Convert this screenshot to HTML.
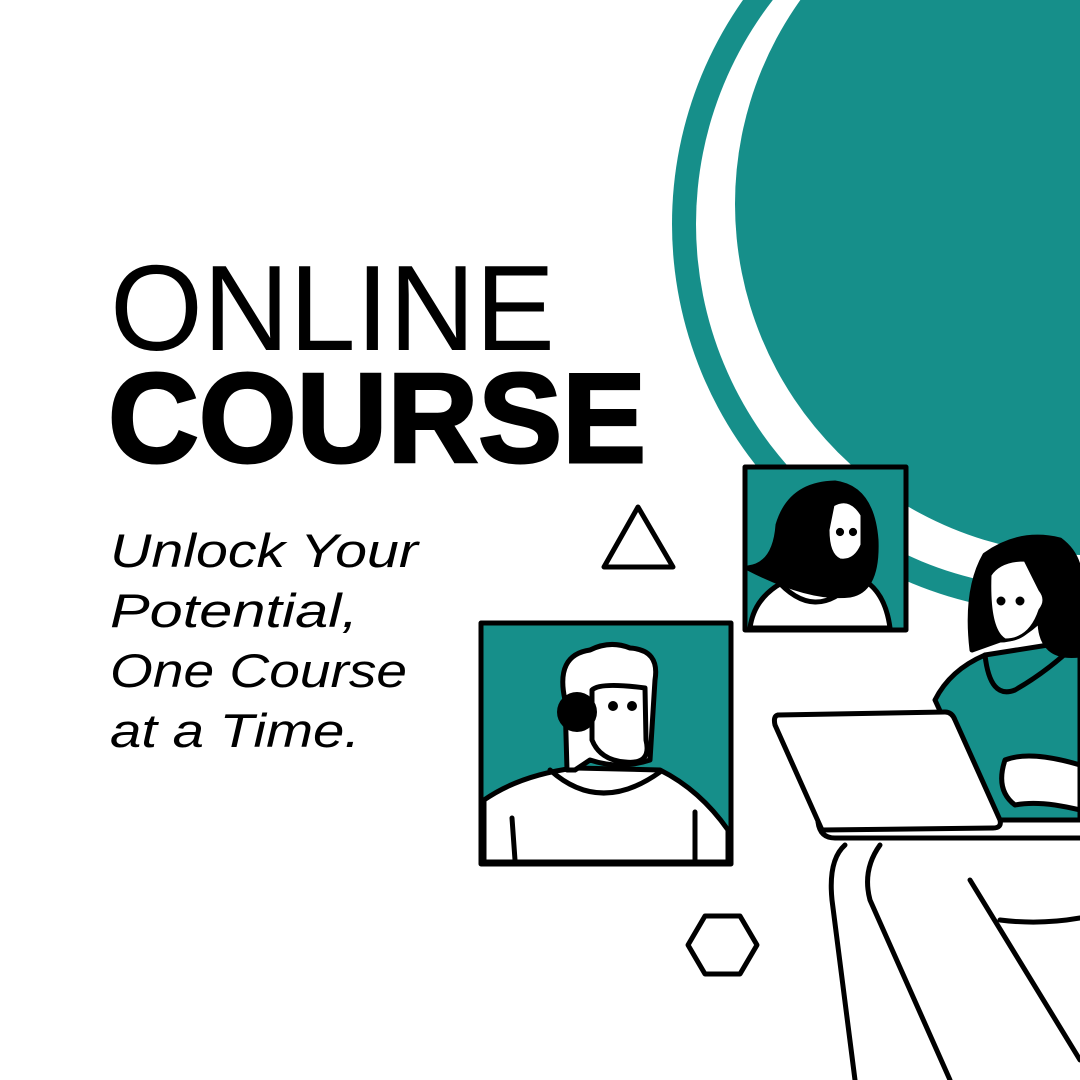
<!DOCTYPE html>
<html><head><meta charset="utf-8"><style>
html,body{margin:0;padding:0;background:#fff}
svg{display:block}
</style></head><body>
<svg width="1080" height="1080" viewBox="0 0 1080 1080" xmlns="http://www.w3.org/2000/svg">
<rect width="1080" height="1080" fill="#fff"/>
<circle cx="1061" cy="224" r="389" fill="#168f8a"/>
<circle cx="1061" cy="224" r="365" fill="#fff"/>
<circle cx="1086" cy="204" r="351" fill="#168f8a"/>

<g font-family="'Liberation Sans',sans-serif" fill="#000">
<text x="110" y="350" font-size="122" textLength="445" lengthAdjust="spacingAndGlyphs" font-weight="300" stroke="#fff" stroke-width="2.5" paint-order="stroke">ONLINE</text>
<text x="108" y="462" font-size="127" font-weight="bold" textLength="538" lengthAdjust="spacingAndGlyphs" stroke="#000" stroke-width="3">COURSE</text>
<g font-style="italic" font-size="47">
<text x="110" y="567" textLength="308" lengthAdjust="spacingAndGlyphs">Unlock Your</text>
<text x="110" y="627" textLength="248" lengthAdjust="spacingAndGlyphs">Potential,</text>
<text x="110" y="687" textLength="297" lengthAdjust="spacingAndGlyphs">One Course</text>
<text x="110" y="747" textLength="250" lengthAdjust="spacingAndGlyphs">at a Time.</text>
</g>
</g>

<g fill="none" stroke="#000" stroke-width="5" stroke-linejoin="round" stroke-linecap="round">
<polygon points="638,507 604,567 673,567" fill="#fff"/>
<polygon points="705,916 740,916 757,945 740,974 705,974 688,945" fill="#fff"/>

<!-- man frame -->
<rect x="481" y="623" width="250" height="241" fill="#168f8a"/>
<path d="M484,800 Q520,775 575,768 L660,770 Q700,790 728,830 L728,862 L484,862 Z" fill="#fff"/>
<path d="M550,770 Q600,815 660,772"/>
<path d="M512,818 L515,860 M695,812 L695,860"/>
<path d="M567,770 L565,700 Q555,655 590,650 Q610,640 630,648 Q660,650 655,680 L650,760 Q620,770 590,760 L575,770 Z" fill="#fff"/>
<path d="M592,690 Q600,682 645,688 L646,740 Q652,765 625,762 Q600,760 592,740 Z" fill="#fff"/>
<circle cx="577" cy="712" r="20" fill="#000" stroke="none"/>
<circle cx="613" cy="706" r="2.5" fill="#000"/><circle cx="632" cy="706" r="2.5" fill="#000"/>

<!-- woman frame -->
<rect x="745" y="467" width="161" height="163" fill="#168f8a"/>
<path d="M750,628 Q755,590 800,575 Q830,575 860,578 Q885,590 890,628 Z" fill="#fff"/>
<path d="M775,578 Q815,625 855,580"/>
<path d="M748,568 Q775,565 778,525 Q790,484 835,483 Q872,488 876,540 Q878,590 850,595 Q810,600 748,568 Z" fill="#000"/>
<path d="M833,505 Q850,495 862,515 L862,545 Q855,562 840,560 Q828,555 828,530 Z" fill="#fff" stroke-width="3"/>
<circle cx="840" cy="532" r="1.6" fill="#000"/><circle cx="853" cy="532" r="1.6" fill="#000"/>

<!-- sitting woman -->
<path d="M935,700 Q950,670 985,655 L1080,640 L1080,820 L990,820 Z" fill="#168f8a"/>
<path d="M985,655 Q990,700 1015,690 Q1050,670 1080,640" />
<path d="M972,650 Q965,590 985,555 Q1020,530 1060,540 Q1080,555 1080,580 L1080,655 Q1040,660 1040,620 Q1020,640 1000,640 Z" fill="#000"/>
<path d="M990,575 Q1000,560 1025,560 L1040,590 Q1048,600 1040,610 Q1030,640 1005,640 Q988,630 990,575 Z" fill="#fff" stroke-width="3"/>
<circle cx="1001" cy="601" r="2" fill="#000"/><circle cx="1020" cy="601" r="2" fill="#000"/>
<path d="M1005,760 Q1030,750 1080,765 L1080,810 Q1040,800 1015,805 Q995,790 1005,760 Z" fill="#fff"/>
<!-- laptop -->
<path d="M778,715 L945,712 Q952,712 955,720 L1000,820 Q1002,828 993,828 L822,830 L775,725 Q773,716 778,715 Z" fill="#fff"/>
<path d="M818,822 Q820,838 835,838 L1080,838"/>
<!-- legs -->
<path d="M845,845 Q828,860 832,900 L855,1080"/>
<path d="M880,845 Q862,870 870,900 L950,1080"/>
<path d="M970,880 L1080,1060"/>
<path d="M1000,920 Q1040,925 1080,918"/>
</g>
</svg>
</body></html>
